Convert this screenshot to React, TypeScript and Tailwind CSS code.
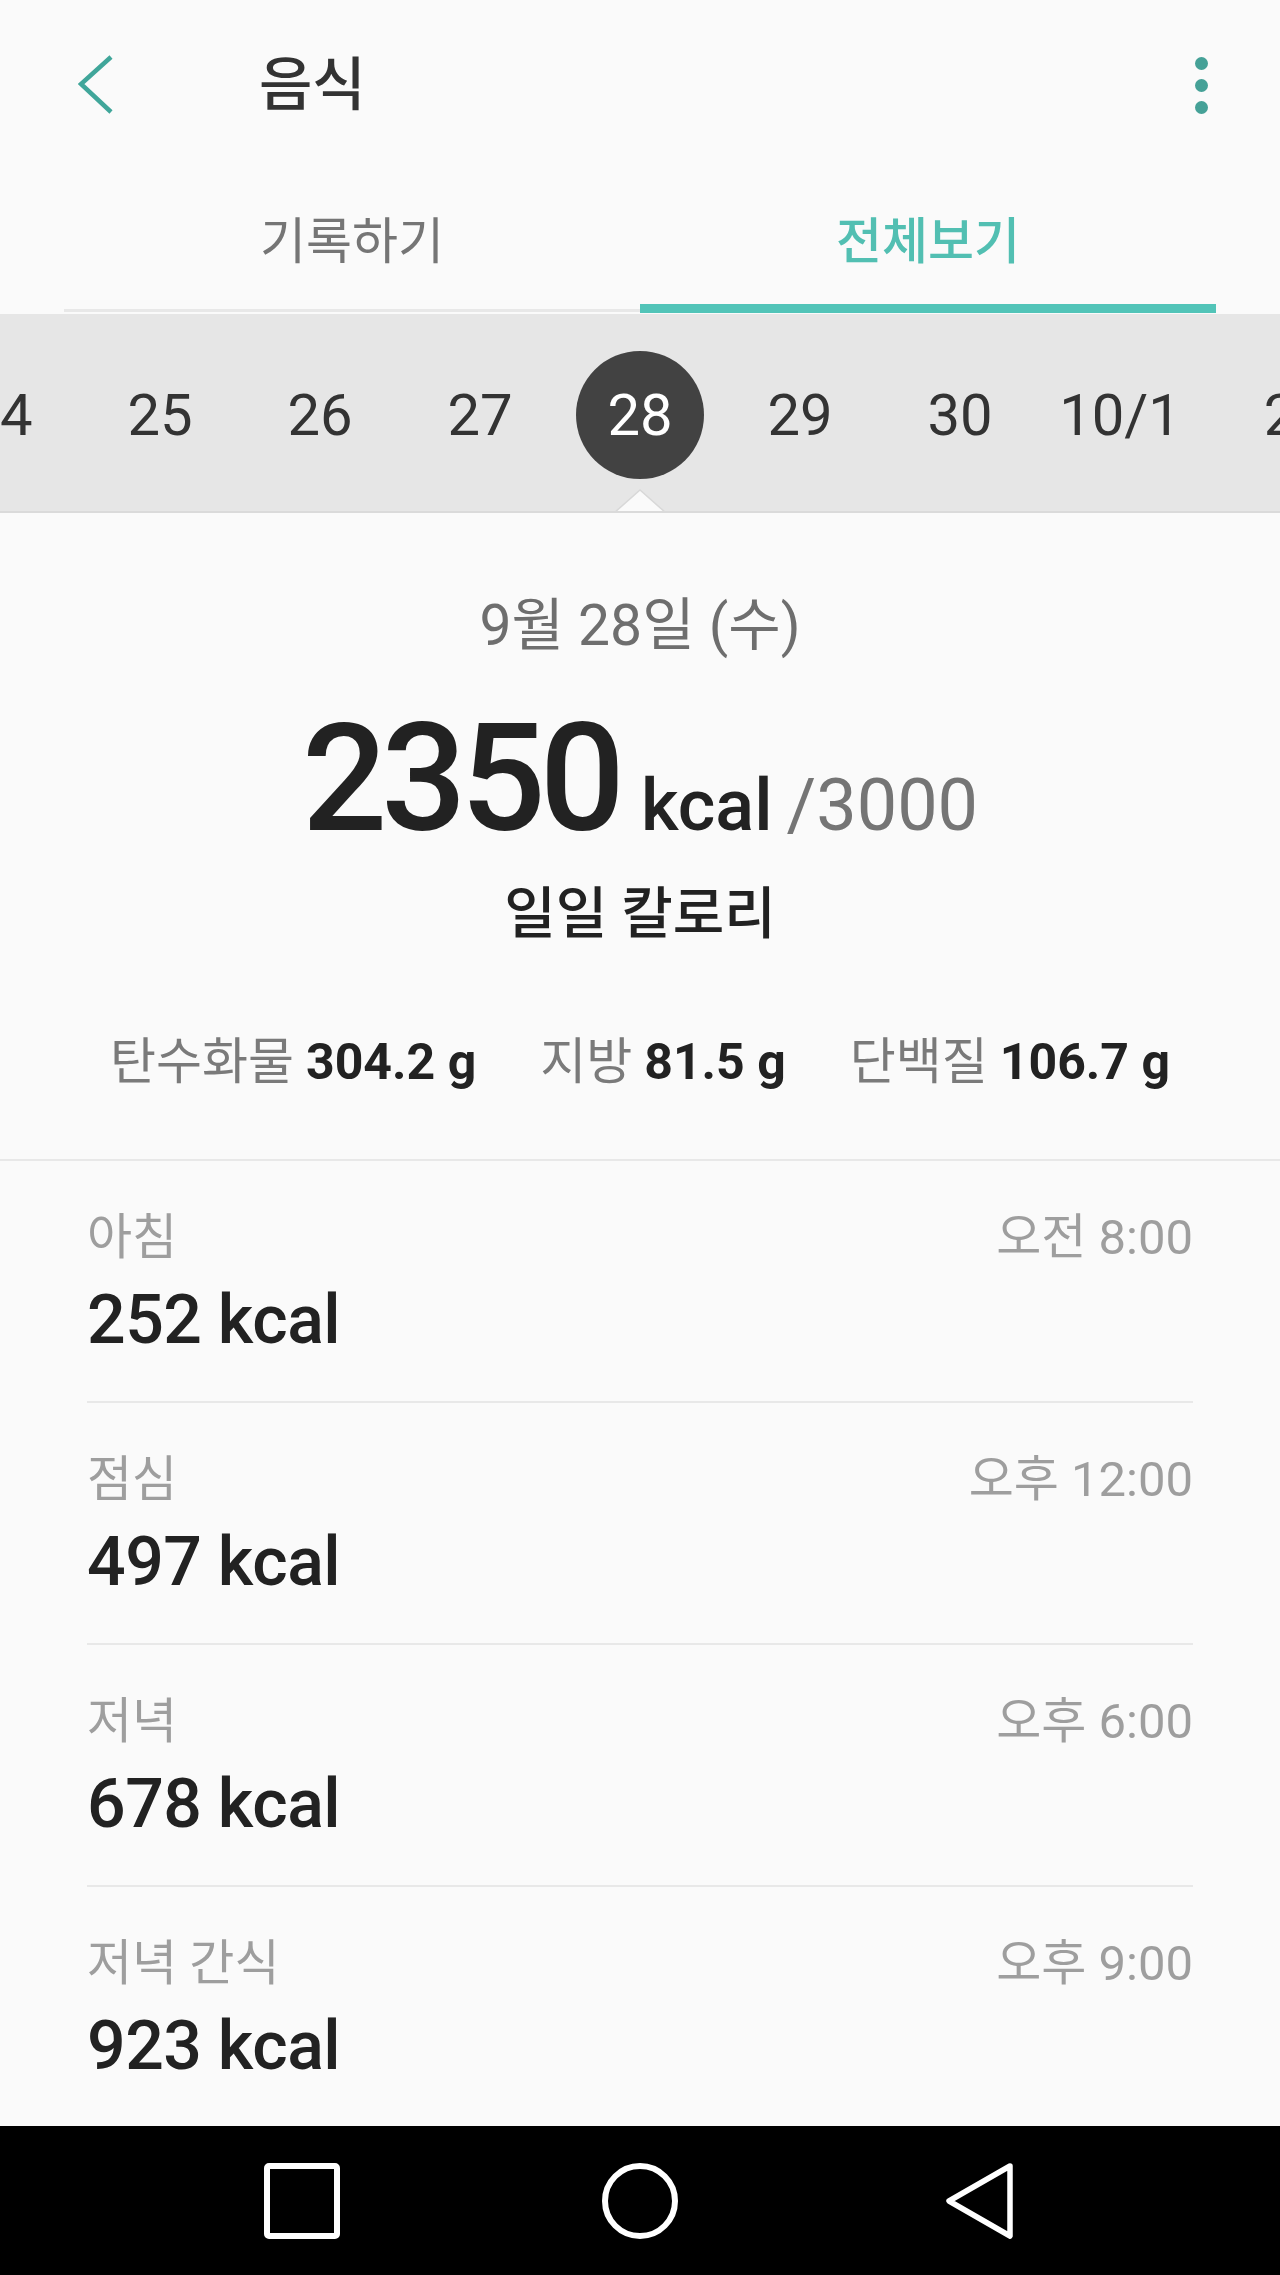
import React from "react";

const dates = ["24", "25", "26", "27", "28", "29", "30", "10/1", "2"];

const meals = [
  { name: "아침", time: "오전 8:00", kcal: "252 kcal" },
  { name: "점심", time: "오후 12:00", kcal: "497 kcal" },
  { name: "저녁", time: "오후 6:00", kcal: "678 kcal" },
  { name: "저녁 간식", time: "오후 9:00", kcal: "923 kcal" },
];

const macros = [
  { label: "탄수화물", value: "304.2 g" },
  { label: "지방", value: "81.5 g" },
  { label: "단백질", value: "106.7 g" },
];

export default function App() {
  return (
    <div className="w-[1280px] h-[2275px] bg-[#fafafa] overflow-hidden flex flex-col font-[Roboto,'Noto_Sans_CJK_KR',sans-serif]">
      {/* Header */}
      <div className="h-[170px] shrink-0 flex items-center relative">
        <div className="w-[259px] shrink-0 flex items-center pl-[78px]">
          <svg width="36" height="60" viewBox="0 0 36 60">
            <polyline
              points="33,2 3,29 33,57"
              fill="none"
              stroke="#40a69a"
              strokeWidth="4.5"
            />
          </svg>
        </div>
        <div className="text-[58px] leading-[70px] font-medium text-[#333333]">음식</div>
        <div className="ml-auto mr-[72px] flex flex-col items-center gap-[9px]">
          <div className="w-[13px] h-[13px] rounded-full bg-[#45a197]" />
          <div className="w-[13px] h-[13px] rounded-full bg-[#45a197]" />
          <div className="w-[13px] h-[13px] rounded-full bg-[#45a197]" />
        </div>
      </div>

      {/* Tabs */}
      <div className="h-[144px] shrink-0 mx-[64px] flex items-start">
        <div className="flex-1 h-[142px] pt-[5px] border-b-[3px] border-[#e8e8e8] flex items-center justify-center">
          <span className="text-[50px] leading-[60px] text-[#757575]">기록하기</span>
        </div>
        <div className="flex-1 h-[143px] pt-[10px] border-b-[9px] border-[#52c4b8] flex items-center justify-center">
          <span className="text-[50px] leading-[60px] font-medium text-[#52bfb2]">전체보기</span>
        </div>
      </div>

      {/* Date strip */}
      <div className="h-[199px] shrink-0 bg-[#e6e6e6] border-b-2 border-[#dadada] relative overflow-hidden">
        <div className="h-full pt-[5px] flex items-center ml-[-80px]">
          {dates.map((d) => (
            <div key={d} className="w-[160px] shrink-0 flex items-center justify-center">
              {d === "28" ? (
                <div className="w-[128px] h-[128px] rounded-full bg-[#424242] flex items-center justify-center text-[58px] text-white">
                  {d}
                </div>
              ) : (
                <span className="text-[58px] text-[#333333]">{d}</span>
              )}
            </div>
          ))}
        </div>
        <svg
          className="absolute left-[614px] bottom-[-2px]"
          width="52"
          height="24"
          viewBox="0 0 52 24"
        >
          <polygon points="0,24 26,1 52,24" fill="#fafafa" />
          <polyline points="0,24 26,1 52,24" fill="none" stroke="#d8d8d8" strokeWidth="1.5" />
        </svg>
      </div>

      {/* Summary */}
      <div className="h-[648px] shrink-0 border-b-2 border-[#e8e8e8] flex flex-col items-center pt-[83px]">
        <div className="h-[60px] flex items-center text-[57px] leading-[60px] text-[#6e6e6e]">
          9월 28일 (수)
        </div>
        <div className="mt-[48px] h-[150px] flex items-baseline justify-center">
          <span className="text-[150px] leading-[150px] font-medium text-[#222222] tracking-[-6px]">
            2350
          </span>
          <span className="ml-[22px] text-[72px] font-medium text-[#222222]">kcal</span>
          <span className="ml-[14px] text-[72px] text-[#757575]">/3000</span>
        </div>
        <div className="mt-[30px] h-[60px] flex items-center text-[56px] leading-[60px] font-medium text-[#222222]">
          일일 칼로리
        </div>
        <div className="mt-[88px] h-[60px] flex items-center justify-center gap-[64px]">
          {macros.map((m) => (
            <div key={m.label} className="flex items-center text-[50px] leading-[60px]">
              <span className="text-[#7a7a7a]">{m.label}</span>
              <span className="ml-[12px] font-bold text-[#222222]">{m.value}</span>
            </div>
          ))}
        </div>
      </div>

      {/* Meals */}
      <div className="flex-1 flex flex-col">
        {meals.map((m, i) => (
          <div
            key={m.name}
            className={
              i < meals.length - 1
                ? "h-[242px] shrink-0 mx-[87px] border-b-2 border-[#e8e8e8] pt-[49px]"
                : "h-[239px] shrink-0 mx-[87px] pt-[49px]"
            }
          >
            <div className="h-[56px] flex items-center justify-between text-[49px] leading-[56px] text-[#9e9e9e]">
              <span>{m.name}</span>
              <span>{m.time}</span>
            </div>
            <div className="mt-[14px] text-[68px] leading-[80px] font-medium text-[#222222] tracking-[-0.5px]">
              {m.kcal}
            </div>
          </div>
        ))}
      </div>

      {/* Navigation bar */}
      <div className="h-[149px] shrink-0 bg-black flex items-center justify-center gap-[262px]">
        <svg width="76" height="76" viewBox="0 0 76 76">
          <rect x="3" y="3" width="70" height="70" rx="2" fill="none" stroke="white" strokeWidth="6" />
        </svg>
        <svg width="76" height="76" viewBox="0 0 76 76">
          <circle cx="38" cy="38" r="35" fill="none" stroke="white" strokeWidth="6" />
        </svg>
        <svg width="76" height="76" viewBox="0 0 76 76">
          <polygon
            points="70,3 9,38 70,73"
            fill="none"
            stroke="white"
            strokeWidth="5.5"
            strokeLinejoin="round"
          />
        </svg>
      </div>
    </div>
  );
}
